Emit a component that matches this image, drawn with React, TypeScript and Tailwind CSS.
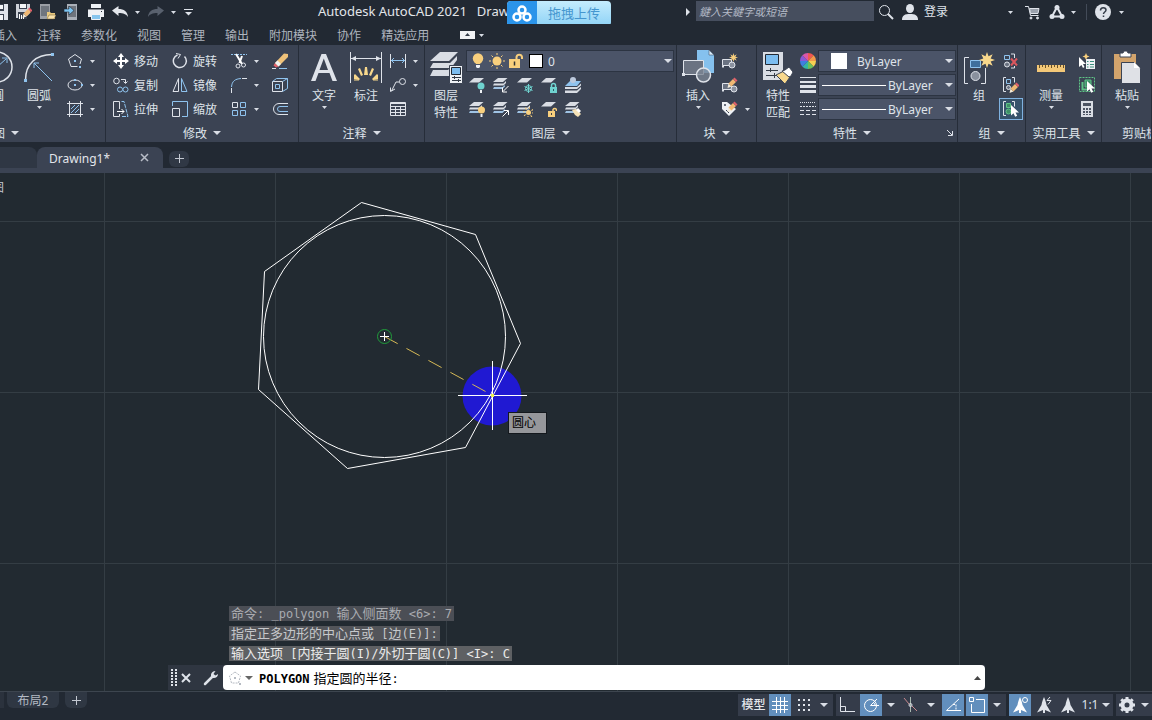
import type { ReactNode } from "react";
import clsx from "clsx";

interface IconProps {
  children: ReactNode;
  size?: number;
}

// stroke based icon, fills are given on the shapes themselves
const Icon = ({ children, size = 16 }: IconProps) => (
  <svg
    width={size}
    height={size}
    viewBox={`0 0 ${size} ${size}`}
    fill="none"
    stroke="#dfe3ea"
    className="shrink-0"
    aria-hidden="true"
  >
    {children}
  </svg>
);

const Caret = ({ big = false }: { big?: boolean }) =>
  big ? (
    <svg width="8" height="4" viewBox="0 0 8 4" className="shrink-0" aria-hidden="true">
      <path d="M0 0h8L4 4z" fill="#d9dde5" />
    </svg>
  ) : (
    <svg width="5" height="3" viewBox="0 0 5 3" className="shrink-0" aria-hidden="true">
      <path d="M0 0h5L2.500 3z" fill="#d9dde5" />
    </svg>
  );

const Pencil = () => (
  <g stroke="none">
    <path d="M6.500 14l1-4.500 3 3z" fill="#f3ead8" />
    <path d="M7.500 9.500L12 5l3 3-4.500 4.500z" fill="#f0b873" />
    <path d="M12 5l1.500-1.500 3 3L15 8z" fill="#e0606a" />
  </g>
);

const Cursor = () => <path d="M8 4v10.500l2.500-2.200 1.700 3.500 2-1-1.700-3.300H16z" fill="#fff" stroke="none" />;

const Sheet = () => <path d="M5 1h10l-5 4.500H0z" fill="#d9dde4" stroke="none" />;

const Stack = () => (
  <g stroke="none">
    <path d="M5 1h9.500L10 5H0z" fill="#d9dde4" />
    <path d="M1 6.500h9.500L13 4v2l-2.500 2.500H0z" fill="#d9dde4" />
    <path d="M1 10h8.500L12 8v1.500L9.500 12H0z" fill="#9fc3e4" />
  </g>
);

const Rays = ({ x, y, r, r2, n = 8, color }: { x: number; y: number; r: number; r2: number; n?: number; color: string }) => {
  const points = Array.from({ length: n * 2 }, (_, i) => {
    const a = (Math.PI * i) / n;
    const d = i % 2 ? r : r2;
    return `${x + d * Math.sin(a)},${y - d * Math.cos(a)}`;
  });
  return <polygon points={points.join(" ")} fill={color} stroke="none" />;
};

const icons = {
  save: (
    <Icon>
      <path d="M0 0h16v16H0z" fill="#dfe3ea" stroke="none" />
      <path d="M3 0h9v7H3zM3 10h9v6H3z" fill="#3a4250" stroke="none" />
      <path d="M4 1h7v4H4zM6 11h5v5H6z" fill="#f4f6f8" stroke="none" />
    </Icon>
  ),
  saveAs: (
    <Icon>
      <path d="M0 0h14v9l-5 5H0z" fill="#cfd3da" stroke="none" />
      <path d="M3 0h8v5H3zM2 8h9v7H2z" fill="#3a4250" stroke="none" />
      <path d="M4 0h6v4H4z" fill="#f4f6f8" stroke="none" />
      <path d="M3.500 15V10M5.500 15v-4M7.500 15v-3" stroke="#fff" />
      <Pencil />
    </Icon>
  ),
  open: (
    <Icon>
      <path d="M0 0h10v15H0z" fill="#9b9fa6" stroke="none" />
      <path d="M1 2h8v10H1z" fill="#6f757e" stroke="none" />
      <path d="M7 8h3l1 1h4v6H7z" fill="#e8c87e" stroke="none" />
      <path d="M7 15l2-4h7l-2 4z" fill="#f9e2ab" stroke="#6c5a35" strokeWidth=".5" />
    </Icon>
  ),
  cloudOpen: (
    <Icon>
      <path d="M3 0h10v16H3z" fill="#aab0b9" stroke="none" />
      <path d="M4 2h8v11H4z" fill="#6f757e" stroke="none" />
      <path d="M0 5h5V2l5 4.500-5 4.500V8H0z" fill="#7cc4f2" stroke="#222933" strokeWidth=".6" />
    </Icon>
  ),
  print: (
    <Icon>
      <path d="M3 0h10v4H3zM0 5h16v8H0z" fill="#eef1f5" stroke="none" />
      <path d="M0 5h16M13 7.500h1" stroke="#222933" />
      <path d="M3.500 10.500h9v5h-9z" fill="#86c5ee" stroke="#eef1f5" />
    </Icon>
  ),
  undo: (
    <Icon>
      <path d="M0 6.500L6.500 2v3c5.500 0 9 2.500 9.500 8-2-3-4.500-4-9.500-4v3z" fill="#e3e6eb" stroke="none" />
    </Icon>
  ),
  redo: (
    <Icon>
      <path d="M16 6.500L9.500 2v3C4 5 .5 7.500 0 13c2-3 4.500-4 9.500-4v3z" fill="#59616e" stroke="none" />
    </Icon>
  ),
  more: (
    <Icon size={9}>
      <path d="M0 1.500h9" />
      <path d="M1 4h7L4.500 7.500z" fill="#dfe3ea" stroke="none" />
    </Icon>
  ),
  polygon: (
    <Icon>
      <path d="M10.500 13.500H4L1.500 6 8 1.500 14.500 6l-1.500 5" />
      <path d="M7 8h2M12 14h2" stroke="#8fc3ee" strokeWidth="2" />
    </Icon>
  ),
  ellipse: (
    <Icon>
      <ellipse cx="8" cy="8" rx="7" ry="5" />
      <path d="M7 8h2M7 3h2M14 8h2" stroke="#8fc3ee" strokeWidth="2" />
    </Icon>
  ),
  hatch: (
    <Icon>
      <path d="M2.500 0v16M13.500 0v16M0 2.500h16M0 13.500h16" />
      <path d="M4 8l4-4M4 12l8-8M8 12l4-4" stroke="#8fc3ee" />
    </Icon>
  ),
  move: (
    <Icon>
      <path d="M8 2v12M2 8h12" strokeWidth="2" stroke="#fff" />
      <path d="M8 0l3 4H5zM8 16l3-4H5zM0 8l4-3v6zM16 8l-4-3v6z" fill="#fff" stroke="none" />
    </Icon>
  ),
  copy: (
    <Icon>
      <circle cx="3.500" cy="4" r="2.800" />
      <path d="M8 2.500h4.500V6M10.500 4.500l2 2 2-2" />
      <circle cx="7" cy="12.500" r="2.500" stroke="#8fc3ee" />
      <circle cx="12.500" cy="12.500" r="2.500" stroke="#8fc3ee" />
    </Icon>
  ),
  stretch: (
    <Icon>
      <path d="M6.500 8V.5h-6v15h6V13" />
      <path d="M8.500.5H11l4 15H8" stroke="#8fc3ee" strokeDasharray="4 1" />
      <path d="M4 10.500h7M8.500 8l2.500 2.500L8.500 13" stroke="#fff" />
    </Icon>
  ),
  rotate: (
    <Icon>
      <path d="M12.500 3.500A6.500 6.500 0 1 1 5.500 2" strokeWidth="1.500" />
      <path d="M4 .5L8.500 1.500 6 5.500" />
    </Icon>
  ),
  mirror: (
    <Icon>
      <path d="M6.500 1.500v13H1z" />
      <path d="M9.500 1.500v13H15z" stroke="#8fc3ee" />
    </Icon>
  ),
  scale: (
    <Icon>
      <path d="M.5 7.500h7v8h-7z" />
      <path d="M.5 5V.5h15v15H10" stroke="#8fc3ee" />
    </Icon>
  ),
  trim: (
    <Icon>
      <path d="M0 1.500h16" strokeDasharray="2 1" stroke="#8fc3ee" />
      <path d="M5 1l6 10M11 3L8.500 10" strokeWidth="2" stroke="#fff" />
      <circle cx="7" cy="13" r="2" />
      <circle cx="12.500" cy="12" r="2" />
    </Icon>
  ),
  fillet: (
    <Icon>
      <path d="M.5 16v-5M11 1.500h5" />
      <path d="M.5 10C1 4 4 2 10 1.500" stroke="#8fc3ee" />
    </Icon>
  ),
  array: (
    <Icon>
      <path d="M1.500 1.500h5v5h-5z" />
      <path d="M9.500 1.500h5v5h-5zM1.500 9.500h5v5h-5zM9.500 9.500h5v5h-5z" stroke="#8fc3ee" />
    </Icon>
  ),
  erase: (
    <Icon>
      <path d="M0 15.500h4" />
      <path d="M7 15.500h8" stroke="#8fc3ee" />
      <path d="M3 10l3.500 3.500-2.500 1-2.500-2z" fill="#e0606a" stroke="none" />
      <path d="M3 10l9-9.500L16 1v3l-9.500 9.500z" fill="#efc27a" stroke="none" />
      <path d="M3 10l2.500-2.500L9 11l-2.500 2.500z" fill="#f2f2f2" stroke="none" />
    </Icon>
  ),
  explode: (
    <Icon>
      <path d="M.5 4.500h10v10H.5z" />
      <path d="M.5 4.500l4-3h11l-5 3M15.500 1.500v10l-5 3M3.500 7.500h4v4h-4z" stroke="#8fc3ee" />
    </Icon>
  ),
  offset: (
    <Icon>
      <path d="M16 2.500H7a5.500 5.500 0 0 0 0 11h9" />
      <path d="M16 5.500H8a2.500 2.500 0 0 0 0 5h8" stroke="#8fc3ee" />
    </Icon>
  ),
  linear: (
    <Icon>
      <path d="M.5 1v14M15.500 1v14" />
      <path d="M1 7.500h14M4 5L1.500 7.500 4 10M12 5l2.500 2.500L12 10" stroke="#8fc3ee" />
    </Icon>
  ),
  leader: (
    <Icon>
      <circle cx="12.500" cy="4.500" r="3" />
      <path d="M9.500 5H6L1.500 14M.5 10.500v4L5 12" />
    </Icon>
  ),
  table: (
    <Icon>
      <path d="M.5 1.500h15v13H.5zM.5 2.500h15M.5 5.500h15M.5 8.500h15M.5 11.500h15M5.500 5v9M10.500 5v9" />
    </Icon>
  ),
  bulb: (
    <Icon>
      <circle cx="8" cy="5.500" r="5.200" fill="#f8cf7d" stroke="none" />
      <path d="M5 9h6l-1 2H6z" fill="#f8cf7d" stroke="none" />
      <path d="M6 12h4v2l-1 1H7l-1-1z" fill="#eef1f5" stroke="none" />
    </Icon>
  ),
  sun: (
    <Icon>
      <circle cx="8" cy="8" r="4.500" fill="#f8cf7d" stroke="none" />
      <path d="M8 0v2M8 14v2M0 8h2M14 8h2M2.500 2.500l1.500 1.500M12 12l1.500 1.500M2.500 13.500L4 12M12 4l1.500-1.500" stroke="#f8cf7d" />
    </Icon>
  ),
  unlock: (
    <Icon>
      <path d="M8.500 7V4a2.800 2.800 0 0 1 5.500 0v2" stroke="#f8cf7d" strokeWidth="2" />
      <path d="M1 6h11v9H1z" fill="#f8cf7d" stroke="none" />
      <path d="M6.500 8.500v4" stroke="#333" strokeWidth="1.500" />
    </Icon>
  ),
  search: (
    <Icon>
      <circle cx="6.500" cy="6.500" r="5" />
      <path d="M10 10l5 5" strokeWidth="2" />
    </Icon>
  ),
  user: (
    <Icon>
      <ellipse cx="8" cy="4.500" rx="4" ry="4.500" fill="#dfe3ea" stroke="none" />
      <path d="M0 16c0-5 3-6 8-6s8 1 8 6z" fill="#dfe3ea" stroke="none" />
    </Icon>
  ),
  cart: (
    <Icon>
      <path d="M0 2.500h3.500l2 9h8" />
      <path d="M4.500 4.500H14l-1 5H5.500z" fill="#9aa1ac" />
      <circle cx="6" cy="14" r="1" fill="#dfe3ea" />
      <circle cx="12.500" cy="14" r="1" fill="#dfe3ea" />
    </Icon>
  ),
  appStore: (
    <Icon>
      <path d="M8 3L3 12.500h10z" strokeWidth="2" />
      <circle cx="8" cy="3.500" r="2.500" fill="#dfe3ea" stroke="none" />
      <circle cx="3" cy="12.500" r="2.500" fill="#dfe3ea" stroke="none" />
      <circle cx="13" cy="12.500" r="2.500" fill="#dfe3ea" stroke="none" />
    </Icon>
  ),
  help: (
    <Icon>
      <circle cx="8" cy="8" r="8" fill="#dfe3ea" stroke="none" />
      <path d="M5.500 6.500c0-4 5.500-3.500 5.500-.5 0 2-2.500 2-2.500 4M8.500 11.500v1.500" stroke="#333b47" strokeWidth="1.500" />
    </Icon>
  ),
  insertNew: (
    <Icon>
      <path d="M.5 6.500h9v6h-9z" fill="#6b7382" />
      <circle cx="10" cy="12" r="3" fill="#8a919e" />
      <path d="M0 13.500h2" strokeWidth="2" />
      <Rays x={11.500} y={4.500} r={2} r2={4.500} color="#f8cf7d" />
    </Icon>
  ),
  insertEdit: (
    <Icon>
      <path d="M.5 6.500h9v6h-9z" fill="#6b7382" />
      <circle cx="12" cy="12" r="3" fill="#8a919e" />
      <path d="M0 13.500h2" strokeWidth="2" />
      <g transform="translate(-1 -3)"><Pencil /></g>
    </Icon>
  ),
  attribute: (
    <Icon>
      <path d="M0 1h5l9 7-7 7-7-7z" fill="#eef1f5" stroke="none" />
      <circle cx="3" cy="4" r="1" fill="#3b4353" stroke="none" />
      <path d="M4 9l3 3" stroke="#3b4353" />
      <g transform="translate(-1 -3)"><Pencil /></g>
    </Icon>
  ),
  lineweight: (
    <Icon>
      <path d="M0 0h16v1H0zM0 4h16v2H0zM0 8h16v3H0zM0 13h16v3H0z" fill="#dfe3ea" stroke="none" />
    </Icon>
  ),
  linetype: (
    <Icon>
      <path d="M0 1.500h16" strokeDasharray="1 1" />
      <path d="M0 5.500h16" strokeDasharray="2 1" />
      <path d="M0 9.500h16M0 13.500h16" strokeDasharray="4 2" />
    </Icon>
  ),
  colorWheel: (
    <Icon>
      {["#f0574f", "#f2994a", "#f5cf52", "#6cc05a", "#35b5a5", "#3f7ee0", "#8a58d6", "#d957a8"].map((c, i) => {
        const a = (i * Math.PI) / 4;
        const b = a + Math.PI / 4;
        return (
          <path
            key={c}
            d={`M8 8L${8 + 8 * Math.sin(a)} ${8 - 8 * Math.cos(a)}A8 8 0 0 1 ${8 + 8 * Math.sin(b)} ${8 - 8 * Math.cos(b)}z`}
            fill={c}
            stroke="none"
          />
        );
      })}
    </Icon>
  ),
  ungroup: (
    <Icon>
      <path d="M1.500 2.500h5v4h-5z" stroke="#8fc3ee" />
      <circle cx="4" cy="11.500" r="2.500" fill="#6b7382" />
      <path d="M8 1h3.500v4M11.500 13v2H8" />
      <path d="M8 5.500l6 7M14 5.500l-6 7" stroke="#d9575e" strokeWidth="2" />
    </Icon>
  ),
  groupEdit: (
    <Icon>
      <path d="M3 .5H.5v14H3M9 .5h2.500v5" />
      <path d="M3.500 2.500h4v4h-4z" stroke="#8fc3ee" />
      <circle cx="5.500" cy="10.500" r="2" fill="#6b7382" />
      <g transform="translate(0 2)"><Pencil /></g>
    </Icon>
  ),
  groupSelect: (
    <Icon>
      <path d="M3 .5H.5v14H3M9 .5h2.500v5" />
      <path d="M3.500 2.500h4v4h-4z" stroke="#5fc487" fill="#3f8f68" />
      <circle cx="5.500" cy="10.500" r="2.500" stroke="#5fc487" fill="#3f8f68" />
      <Cursor />
    </Icon>
  ),
  quickSelect: (
    <Icon>
      <path d="M7 6h9v10H7z" fill="#eef1f5" stroke="none" />
      <path d="M8 8.500h1.500M11 8.500h4M8 11.500h1.500M11 11.500h4M8 14h1.500M11 14h4" stroke="#3a8f7d" />
      <path d="M0 4v10l2.500-2 1.500 3 1.500-1-1.500-3h3z" fill="#fff" stroke="none" />
      <Rays x={7} y={3.500} r={1.500} r2={3.500} n={4} color="#f8cf7d" />
    </Icon>
  ),
  selectAll: (
    <Icon>
      <path d="M.5.5h15v14H.5z" stroke="#5fc487" strokeDasharray="2 1" />
      <path d="M6 3h6v7H6z" fill="#3f8f68" stroke="#5fc487" />
      <path d="M3.500 5v7.500H9" stroke="#5fc487" strokeWidth="2" />
      <Cursor />
    </Icon>
  ),
  calculator: (
    <Icon>
      <path d="M2 0h12v16H2z" fill="#d9dde4" stroke="none" />
      <path d="M4 2h8v3H4zM4 7h2v2H4zM7 7h2v2H7zM10 7h2v2h-2zM4 10h2v2H4zM7 10h2v2H7zM10 10h2v2h-2zM4 13h2v1H4zM7 13h2v1H7zM10 13h2v1h-2z" fill="#4b5362" stroke="none" />
    </Icon>
  ),
};

const layerTools = [
  {
    name: "关闭",
    icon: (
      <Icon>
        <Sheet />
        <circle cx="12" cy="9" r="3.500" fill="#6fd3d0" stroke="none" />
        <path d="M11 13h2v3h-2z" fill="#eef1f5" stroke="none" />
      </Icon>
    ),
  },
  {
    name: "置为当前",
    icon: (
      <Icon>
        <Stack />
        <path d="M15.500 9L10 14.500M9.500 10.500v4.500H14" stroke="#fff" />
      </Icon>
    ),
  },
  {
    name: "冻结",
    icon: (
      <Icon>
        <Sheet />
        <path d="M11.500 7v9M7.500 9.500l8 4M7.500 13.500l8-4" stroke="#6fd3d0" />
        <circle cx="11.500" cy="11.500" r="3" stroke="#6fd3d0" />
      </Icon>
    ),
  },
  {
    name: "锁定",
    icon: (
      <Icon>
        <Sheet />
        <path d="M10.500 10V8.500a2 2 0 0 1 4 0V10" stroke="#6fd3d0" strokeWidth="1.500" />
        <path d="M9 10h7v6H9z" fill="#6fd3d0" stroke="none" />
        <path d="M12.500 12v2" stroke="#2b5a60" />
      </Icon>
    ),
  },
  {
    name: "匹配图层",
    icon: (
      <Icon>
        <path d="M5 4h11l-4 5H0z" fill="#8fc3ee" stroke="none" />
        <path d="M0 10h12l4-3.500v2L12 12H0zM0 13.500h12l4-3.500v2l-4 4H0z" fill="#d9dde4" stroke="none" />
        <circle cx="8" cy="3" r="3" fill="#bcc9dc" stroke="none" />
      </Icon>
    ),
  },
  {
    name: "打开所有图层",
    icon: (
      <Icon>
        <Stack />
        <circle cx="12.500" cy="9" r="3.500" fill="#f8cf7d" stroke="none" />
        <path d="M11.500 13h2v3h-2z" fill="#eef1f5" stroke="none" />
      </Icon>
    ),
  },
  {
    name: "上一个",
    icon: (
      <Icon>
        <Stack />
        <path d="M9.500 15.500L15 10M11 9.500h4.500V14" stroke="#fff" />
      </Icon>
    ),
  },
  {
    name: "解冻",
    icon: (
      <Icon>
        <Stack />
        <circle cx="11.500" cy="11.500" r="4.500" stroke="#f8cf7d" strokeDasharray="1 2.500" strokeWidth="2" />
        <circle cx="11.500" cy="11.500" r="2.500" fill="#f8cf7d" stroke="none" />
      </Icon>
    ),
  },
  {
    name: "解锁",
    icon: (
      <Icon>
        <Sheet />
        <path d="M12 10V8.500a2 2 0 0 1 3.500 0V10" stroke="#f8cf7d" strokeWidth="1.500" />
        <path d="M7 10h7v6H7z" fill="#f8cf7d" stroke="none" />
        <path d="M10.500 12v2" stroke="#444" />
      </Icon>
    ),
  },
  {
    name: "更改为当前图层",
    icon: (
      <Icon>
        <Stack />
        <path d="M7 9l4-1 5 5-3 3-3-2z" fill="#f6e3b8" stroke="none" />
        <path d="M11 9l2-2 3 3-2 2z" fill="#fff" stroke="none" />
      </Icon>
    ),
  },
];

const bigIcons = {
  circle: (
    <Icon size={32}>
      <circle cx="15" cy="18" r="15" strokeWidth="1.500" />
      <path d="M15 18l9-8M20 9h5v5" stroke="#8fc3ee" />
    </Icon>
  ),
  arc: (
    <Icon size={32}>
      <path d="M2.500 31C2.500 15 13 5.500 29 5.500" strokeWidth="1.500" />
      <path d="M29 32L11 14M11 19v-5h5" stroke="#8fc3ee" />
      <path d="M1 30h3v3H1zM28 4h3v3h-3z" fill="#8fc3ee" stroke="none" />
    </Icon>
  ),
  text: (
    <Icon size={32}>
      <path d="M3 32L13.500 5h4.500L29 32h-4.500l-3-8h-11l-3 8zM11.500 21h8.500L15.800 9.500z" fill="#dfe3ea" fillRule="evenodd" stroke="none" />
    </Icon>
  ),
  dimension: (
    <Icon size={32}>
      <path d="M.5 3v31M31.500 3v31M1 9.500h30" />
      <path d="M1 9.500l5-2.500v5zM31 9.500L26 7v5z" fill="#dfe3ea" stroke="none" />
      <path d="M15 18h2l1 8h-4zM8 20l2-1 3 7-2 1zM24 20l-2-1-3 7 2 1zM4 26l1-1 5 5-1 1-5-1zM28 26l-1-1-5 5 1 1 5-1z" fill="#f8d88c" stroke="none" />
      <path d="M4 31h5M23 31h5" stroke="#f8d88c" />
    </Icon>
  ),
  layers: (
    <Icon size={32}>
      <path d="M10 3h18l-9 9H0z" fill="#d9dde4" stroke="none" />
      <path d="M3 14h17l7-7v4l-6 8H0zM3 21h15l3-3v4l-2 5H0z" fill="#d9dde4" stroke="none" />
      <path d="M19.500 16.500h13v18h-13z" fill="#eef1f5" stroke="#3b4353" />
      <path d="M21.500 18.500h9v7h-9z" fill="#7cbdf0" stroke="#222933" />
      <path d="M22 28.500h9M22 31.500h9M24.500 27v3M28.500 30v3" stroke="#333b47" />
    </Icon>
  ),
  insert: (
    <Icon size={32}>
      <path d="M15 1h12l5 5v18H15z" fill="#85c1ee" stroke="none" />
      <path d="M27 1v5h5z" fill="#d5e9f8" stroke="#3b4353" strokeWidth=".5" />
      <path d="M1.500 11.500h20v14h-20z" fill="#6b7382" />
      <circle cx="21.500" cy="26" r="7" fill="#7b8493" fillOpacity=".8" strokeWidth="1.500" />
      <path d="M0 24h3v3H0z" fill="#dfe3ea" stroke="none" />
    </Icon>
  ),
  match: (
    <Icon size={32}>
      <path d="M1 3h20v28H1z" fill="#d9dde4" stroke="none" />
      <path d="M3.500 5.500h13v10h-13z" fill="#7cbdf0" stroke="#222933" />
      <path d="M4 21.500h12M4 26.500h10M8.500 19v4M12.500 24v5" stroke="#333b47" />
      <path d="M14 26l8-4 6 6-5 7z" fill="#f8d88c" stroke="#3b4353" />
      <path d="M20 22l3-1 4-3 4 5-2 4-2 1z" fill="#fff" stroke="#3b4353" />
    </Icon>
  ),
  group: (
    <Icon size={32}>
      <path d="M6 8.500H1.500v26H5M18 34.500h4.500V19" />
      <path d="M7.500 11.500h10v7h-10z" fill="#3f6f9c" stroke="#8fc3ee" />
      <circle cx="12.500" cy="27" r="4.500" fill="#8a919e" />
      <Rays x={24} y={11} r={4} r2={8} color="#f8d88c" />
    </Icon>
  ),
  ruler: (
    <Icon size={32}>
      <path d="M2 16h28v7H2z" fill="#f3c878" stroke="none" />
      <path d="M4.500 16v3M7.500 16v2M10.500 16v3M13.500 16v2M16.500 16v3M19.500 16v2M22.500 16v3M25.500 16v2M28.500 16v3" stroke="#6a5228" />
    </Icon>
  ),
  paste: (
    <Icon size={32}>
      <path d="M3 5h22v25H3z" fill="#d3a46c" stroke="none" />
      <path d="M9 4h3l1-2h3l1 2h3v4H9z" fill="#fff" stroke="#3b4353" />
      <path d="M10.500 13.500H23l6.500 6v15h-19z" fill="#dfe1e6" stroke="#3b4353" />
      <path d="M23 13v6h6z" fill="#fff" stroke="none" />
    </Icon>
  ),
};

interface PanelProps {
  title: string;
  children: ReactNode;
  className?: string;
  titleClass?: string;
  caret?: boolean;
  launcher?: boolean;
}

const Panel = ({ title, children, className, titleClass, caret = true, launcher = false }: PanelProps) => (
  <section className={clsx("flex flex-col shrink-0 overflow-hidden border-r border-[#262d39] pt-1", className)}>
    <div className="flex h-[75px]">{children}</div>
    <div className="flex h-[18px] items-center">
      <button className={clsx("flex flex-1 items-center justify-center gap-1.5 whitespace-nowrap", titleClass)}>
        <span className="pt-0.5">{title}</span>
        {caret && <Caret big />}
      </button>
      {launcher && (
        <button aria-label="特性面板" className="mr-1">
          <Icon size={6}>
            <path d="M0 0l5 5M5.500 1v4.500H1" />
          </Icon>
        </button>
      )}
    </div>
  </section>
);

interface BigButtonProps {
  icon: ReactNode;
  lines: string[];
  caret?: boolean;
  className?: string;
}

const BigButton = ({ icon, lines, caret = false, className }: BigButtonProps) => (
  <button className={clsx("flex w-8 shrink-0 flex-col items-center", className)}>
    <span className="h-[39px] [&>svg]:overflow-visible">{icon}</span>
    {lines.map((line) => (
      <span key={line} className="h-[17px] whitespace-nowrap leading-4">
        {line}
      </span>
    ))}
    {caret && (
      <span className="pt-px">
        <Caret />
      </span>
    )}
  </button>
);

interface Tool {
  name: string;
  icon: ReactNode;
  text?: boolean;
  caret?: boolean;
  active?: boolean;
}

const ToolColumn = ({ tools, className }: { tools: Tool[]; className?: string }) => (
  <div className={clsx("flex shrink-0 flex-col", className)}>
    {tools.map((t) => (
      <div key={t.name} className="flex h-6 items-center">
        <button
          aria-label={t.name}
          className={clsx(
            "flex items-center gap-[5px] whitespace-nowrap",
            t.active && "-mx-1 h-[22px] border border-[#7fb2e0] bg-[#36536b] px-[3px]"
          )}
        >
          {t.icon}
          {t.text && <span className="pt-0.5">{t.name}</span>}
        </button>
        {t.caret && (
          <button aria-label={`${t.name}选项`} className="ml-[7px]">
            <Caret />
          </button>
        )}
      </div>
    ))}
  </div>
);

const PropertySelect = ({ label, children }: { label: string; children: ReactNode }) => (
  <div className="flex h-[22px] items-center border border-[#2c3442] bg-[#4b5468] pr-0.5">
    {children}
    <select aria-label={label} className="h-5 min-w-0 flex-1 appearance-none pt-0.5 outline-none">
      <option>ByLayer</option>
    </select>
    <Caret big />
  </div>
);

const TitleBar = () => (
  <header className="relative flex h-6 items-center overflow-hidden">
    <div className="-ml-2 flex w-[326px] shrink-0 items-center">
      <button aria-label="保存">{icons.save}</button>
      <button aria-label="另存为" className="ml-2">{icons.saveAs}</button>
      <button aria-label="打开" className="ml-2">{icons.open}</button>
      <button aria-label="从 Web 打开" className="ml-2">{icons.cloudOpen}</button>
      <button aria-label="打印" className="ml-2">{icons.print}</button>
      <button aria-label="放弃" className="ml-2">{icons.undo}</button>
      <button aria-label="放弃选项" className="ml-[7px]"><Caret /></button>
      <button aria-label="重做" className="ml-2">{icons.redo}</button>
      <button aria-label="重做选项" className="ml-[7px]"><Caret /></button>
      <button aria-label="自定义快速访问" className="ml-2">{icons.more}</button>
    </div>
    <h1 className="flex flex-1 gap-2.5 whitespace-nowrap text-[13px] text-[#e2e5ea]">
      <span>Autodesk AutoCAD 2021</span>
      <span>Draw</span>
    </h1>
    <button className="absolute left-[507px] top-px flex h-[25px] w-[104px] overflow-hidden rounded-sm bg-linear-to-b from-[#c4ecfd] to-[#8fd3f6] text-[13px] text-[#4596cf]">
      <span className="flex w-[30px] items-center justify-center self-stretch bg-[#2b94ea]">
        <svg width="20" height="18" viewBox="0 0 20 18" fill="none" stroke="#fff" strokeWidth="2.500" aria-hidden="true">
          <circle cx="10" cy="5" r="3.500" />
          <circle cx="5" cy="12" r="3.500" />
          <circle cx="15" cy="12" r="3.500" />
        </svg>
      </span>
      <span className="flex-1 self-center">拖拽上传</span>
    </button>
    <div className="flex shrink-0 items-center">
      <svg width="4" height="8" viewBox="0 0 4 8" className="mr-1.5" aria-hidden="true">
        <path d="M0 0l4 4-4 4z" fill="#dfe3ea" />
      </svg>
      <input
        type="search"
        aria-label="搜索"
        placeholder="鍵入关鍵字或短语"
        className="mb-0.5 h-5 w-[178px] bg-[#464e5e] px-[3px] text-[11px] italic outline-none placeholder:text-[#b4bac6]"
      />
      <button aria-label="查找" className="ml-1">{icons.search}</button>
      <button className="ml-2 flex items-center gap-1.5">
        {icons.user}
        登录
      </button>
      <button aria-label="登录选项" className="ml-[60px]"><Caret /></button>
      <button aria-label="购物车" className="ml-3">{icons.cart}</button>
      <button aria-label="应用商店" className="ml-2">{icons.appStore}</button>
      <button aria-label="应用商店选项" className="ml-1.5"><Caret /></button>
      <span className="ml-2.5 h-4 w-px bg-[#434b58]" />
      <button aria-label="帮助" className="ml-2">{icons.help}</button>
      <button aria-label="帮助选项" className="ml-2 mr-7"><Caret /></button>
    </div>
  </header>
);

const menuTabs = ["插入", "注释", "参数化", "视图", "管理", "输出", "附加模块", "协作", "精选应用"];

const MenuTabs = () => (
  <nav className="flex h-[21px] items-center gap-5 overflow-hidden pt-px text-[#aeb4be]">
    {menuTabs.map((tab, i) => (
      <a key={tab} href="#" className={clsx("shrink-0 pt-px", i === 0 && "-ml-[7px]")}>
        {tab}
      </a>
    ))}
    <button aria-label="最小化功能区" className="ml-[11px] flex items-center gap-1">
      <svg width="15" height="8" viewBox="0 0 15 8" aria-hidden="true">
        <path d="M0 0h15v8H0z" fill="#f1f3f5" />
        <path d="M7.500 2l2.500 3H5z" fill="#333b47" />
      </svg>
      <Caret />
    </button>
  </nav>
);

const Ribbon = () => (
  <div className="flex h-[97px] overflow-hidden bg-[#3b4353]">
    <Panel title="绘图" className="w-[106px]" titleClass="-ml-[105px]">
      <BigButton icon={bigIcons.circle} lines={["圆"]} className="-ml-[18px]" />
      <BigButton icon={bigIcons.arc} lines={["圆弧"]} caret className="ml-[9px]" />
      <ToolColumn
        className="ml-3"
        tools={[
          { name: "多边形", icon: icons.polygon, caret: true },
          { name: "椭圆", icon: icons.ellipse, caret: true },
          { name: "图案填充", icon: icons.hatch, caret: true },
        ]}
      />
    </Panel>
    <Panel title="修改" className="w-[193px]">
      <ToolColumn
        className="ml-[7px] w-[59px]"
        tools={[
          { name: "移动", icon: icons.move, text: true },
          { name: "复制", icon: icons.copy, text: true },
          { name: "拉伸", icon: icons.stretch, text: true },
        ]}
      />
      <ToolColumn
        className="w-[59px]"
        tools={[
          { name: "旋转", icon: icons.rotate, text: true },
          { name: "镜像", icon: icons.mirror, text: true },
          { name: "缩放", icon: icons.scale, text: true },
        ]}
      />
      <ToolColumn
        className="w-[41px]"
        tools={[
          { name: "修剪", icon: icons.trim, caret: true },
          { name: "圆角", icon: icons.fillet, caret: true },
          { name: "阵列", icon: icons.array, caret: true },
        ]}
      />
      <ToolColumn
        tools={[
          { name: "删除", icon: icons.erase },
          { name: "分解", icon: icons.explode },
          { name: "偏移", icon: icons.offset },
        ]}
      />
    </Panel>
    <Panel title="注释" className="w-[126px]">
      <BigButton icon={bigIcons.text} lines={["文字"]} caret className="ml-[9px]" />
      <BigButton icon={bigIcons.dimension} lines={["标注"]} className="ml-[10px]" />
      <ToolColumn
        className="ml-2"
        tools={[
          { name: "线性", icon: icons.linear, caret: true },
          { name: "引线", icon: icons.leader, caret: true },
          { name: "表格", icon: icons.table },
        ]}
      />
    </Panel>
    <Panel title="图层" className="w-[252px]">
      <BigButton icon={bigIcons.layers} lines={["图层", "特性"]} className="ml-[5px]" />
      <div className="ml-1 mr-0.5 flex flex-1 flex-col">
        <div className="flex h-6 items-center">
          <div className="flex h-[22px] flex-1 items-center gap-[3px] border border-[#2c3442] bg-[#4b5468] pl-[3px] pr-px">
            {icons.bulb}
            {icons.sun}
            {icons.unlock}
            <span className="ml-0.5 h-3.5 w-3.5 border border-black bg-white" />
            <select aria-label="图层" className="ml-0.5 h-5 min-w-0 flex-1 appearance-none pt-0.5 outline-none">
              <option>0</option>
            </select>
            <Caret big />
          </div>
        </div>
        <div className="grid w-[122px] grid-cols-5 pl-0.5">
          {layerTools.map((t) => (
            <button key={t.name} aria-label={t.name} className="flex h-6 items-center pl-px">
              {t.icon}
            </button>
          ))}
        </div>
      </div>
    </Panel>
    <Panel title="块" className="w-20">
      <BigButton icon={bigIcons.insert} lines={["插入"]} caret className="ml-[5px]" />
      <ToolColumn
        className="ml-2"
        tools={[
          { name: "创建", icon: icons.insertNew },
          { name: "编辑", icon: icons.insertEdit },
          { name: "编辑属性", icon: icons.attribute, caret: true },
        ]}
      />
    </Panel>
    <Panel title="特性" className="w-[201px]" launcher>
      <BigButton icon={bigIcons.match} lines={["特性", "匹配"]} className="ml-[5px]" />
      <ToolColumn
        className="ml-1.5"
        tools={[
          { name: "对象颜色", icon: icons.colorWheel },
          { name: "线宽", icon: icons.lineweight },
          { name: "线型", icon: icons.linetype },
        ]}
      />
      <div className="ml-0.5 mr-px flex flex-1 flex-col gap-0.5 pt-px">
        <PropertySelect label="对象颜色">
          <span className="ml-3 mr-2.5 h-4 w-4 bg-white" />
        </PropertySelect>
        <PropertySelect label="线宽">
          <span className="ml-[3px] mr-0.5 h-px w-16 bg-white" />
        </PropertySelect>
        <PropertySelect label="线型">
          <span className="ml-[3px] mr-0.5 h-px w-16 bg-white" />
        </PropertySelect>
      </div>
    </Panel>
    <Panel title="组" className="w-[68px]">
      <BigButton icon={bigIcons.group} lines={["组"]} className="ml-[5px]" />
      <ToolColumn
        className="ml-2"
        tools={[
          { name: "解除编组", icon: icons.ungroup },
          { name: "组编辑", icon: icons.groupEdit },
          { name: "启用组选择", icon: icons.groupSelect, active: true },
        ]}
      />
    </Panel>
    <Panel title="实用工具" className="w-[76px]">
      <BigButton icon={bigIcons.ruler} lines={["测量"]} caret className="ml-[9px]" />
      <ToolColumn
        className="ml-3"
        tools={[
          { name: "快速选择", icon: icons.quickSelect },
          { name: "全部选择", icon: icons.selectAll },
          { name: "快速计算器", icon: icons.calculator },
        ]}
      />
    </Panel>
    <Panel title="剪贴板" className="min-w-[50px] flex-1" titleClass="ml-5 !justify-start" caret={false}>
      <BigButton icon={bigIcons.paste} lines={["粘贴"]} caret className="ml-[9px]" />
    </Panel>
  </div>
);

const FileTabs = () => (
  <div className="border-b-[5px] border-[#3b4353] pt-[5px]">
    <div className="flex h-[21px] items-stretch">
      <div className="w-[37px] rounded-tr-lg bg-[#2f3744]" />
      <div className="flex w-[126px] items-center justify-between rounded-t-lg bg-[#3b4353] pl-3 pr-3.5 text-[#e2e5ea]">
        <a href="#" className="pt-0.5">Drawing1*</a>
        <button aria-label="关闭 Drawing1">
          <Icon size={9}>
            <path d="M1 1l7 7M8 1L1 8" strokeWidth="1.500" stroke="#b9bec8" />
          </Icon>
        </button>
      </div>
      <button aria-label="新图形" className="ml-1.5 mt-0.5 flex h-4 w-5 items-center justify-center self-center rounded-md bg-[#303845]">
        <Icon size={9}>
          <path d="M4.500 0v9M0 4.500h9" stroke="#c3c8d1" />
        </Icon>
      </button>
    </div>
  </div>
);

const history = [
  { text: "命令: _polygon 输入侧面数 <6>: 7", style: "bg-[#4b4e55] text-[#a9abb0]" },
  { text: "指定正多边形的中心点或 [边(E)]:", style: "bg-[#53555a] text-[#c6c8cb]" },
  { text: "输入选项 [内接于圆(I)/外切于圆(C)] <I>: C", style: "bg-[#5e6063] text-[#ececec]" },
];

// latin runs are set one step smaller than the chinese ones
const MixedText = ({ text }: { text: string }) => (
  <>
    {text.split(/([\x20-\x7e]+)/).map((part, i) => (
      <span key={i} className={clsx("whitespace-pre", i % 2 === 1 && "text-xs")}>
        {part}
      </span>
    ))}
  </>
);

const CommandLine = () => (
  <div className="absolute bottom-px left-[168px] right-[167px] font-['DejaVu_Sans_Mono','Noto_Sans_CJK_SC',monospace] text-[13px]">
    <div className="ml-[61px] flex flex-col items-start gap-[5px] pb-1">
      {history.map((h) => (
        <p key={h.text} className={clsx("h-[15px] px-0.5 leading-[15px]", h.style)}>
          <MixedText text={h.text} />
        </p>
      ))}
    </div>
    <div className="flex h-[25px] bg-[#2f3641]">
      <div className="flex w-[55px] items-center gap-1 pl-[3px]">
        <svg width="6" height="17" viewBox="0 0 6 17" aria-hidden="true">
          <path d="M1 0v17M5 0v17" stroke="#dfe3ea" strokeWidth="2" strokeDasharray="2 1" />
        </svg>
        <button aria-label="关闭命令行">
          <Icon size={10}>
            <path d="M1 1l8 8M9 1L1 9" strokeWidth="2" />
          </Icon>
        </button>
        <button aria-label="自定义" className="ml-2">
          <Icon>
            <path d="M2 14l7-7" strokeWidth="2.500" strokeLinecap="round" />
            <path d="M12.500 1C9 1 7 4 8.500 7.500c3 1.500 6.500 0 6.500-3.500l-2.500 1.500-2-1.500z" fill="#dfe3ea" stroke="none" />
          </Icon>
        </button>
      </div>
      <div className="flex flex-1 items-center rounded-sm bg-white pl-1 pr-1 text-black">
        <button aria-label="最近使用的命令" className="flex items-center gap-0.5">
          <Icon>
            <path d="M8 2l5.500 4-2 7h-7l-2-7z" stroke="#b5bac2" strokeDasharray="2 1" />
            <path d="M7 8h2M12 14h2" stroke="#b5bac2" strokeWidth="2" />
          </Icon>
          <svg width="8" height="4" viewBox="0 0 8 4" aria-hidden="true">
            <path d="M0 0h8L4 4z" fill="#666" />
          </svg>
        </button>
        <label htmlFor="command" className="ml-1.5 whitespace-nowrap pt-0.5">
          <b className="text-xs">POLYGON</b>
          <span className="ml-1">
            <MixedText text="指定圆的半径:" />
          </span>
        </label>
        <input id="command" type="text" className="min-w-0 flex-1 outline-none" />
        <svg width="7" height="4" viewBox="0 0 7 4" aria-hidden="true">
          <path d="M0 4h7L3.500 0z" fill="#444" />
        </svg>
      </div>
    </div>
  </div>
);

const Canvas = () => (
  <main className="relative min-h-[400px] flex-1 overflow-hidden border-b border-[#3d454f] bg-[#222a31]">
    <svg className="absolute inset-0 h-full w-full" fill="none" stroke="#fff" role="img" aria-label="正七边形">
      <defs>
        <pattern id="grid" x="104" y="48" width="171" height="171" patternUnits="userSpaceOnUse">
          <path d="M.5 0v171M0 .5h171" stroke="#343d44" />
        </pattern>
      </defs>
      <rect width="100%" height="100%" fill="url(#grid)" stroke="none" />
      <circle cx="492" cy="223" r="29.500" fill="#2019d2" stroke="none" />
      <circle cx="384.500" cy="163.500" r="121" />
      <polygon points="361.500,29.500 475.500,61.500 520.500,170.500 465.500,274.500 347.500,295.500 258.500,216.500 264.500,98.500" />
      <path d="M384.500 163.500L492 222" stroke="#d6b956" strokeDasharray="15 10" />
      <circle cx="384.500" cy="163.500" r="7" stroke="#1f9c3a" />
      <path d="M380 163.500h9M384.500 159v9" />
      <path d="M458 222.500h69M492.500 188v69" />
      <path d="M491 221h3v3h-3z" fill="#e8ef4a" stroke="none" />
    </svg>
    <span className="absolute -left-2 top-[7px] text-[#c3c8d1]">图</span>
    <div className="absolute left-[508px] top-[239px] flex h-[22px] w-[39px] items-center border border-[#14181d] bg-[#96979b] pl-[3px] text-black">
      圆心
    </div>
    <CommandLine />
  </main>
);

interface StatusProps {
  name: string;
  children: ReactNode;
  active?: boolean;
}

const StatusButton = ({ name, children, active = false }: StatusProps) => (
  <button
    aria-label={name}
    className={clsx("flex h-[22px] w-[22px] items-center justify-center", active && "bg-[#628fbd]")}
  >
    {children}
  </button>
);

const StatusMenu = ({ name, className = "w-[18px]" }: { name: string; className?: string }) => (
  <button aria-label={name} className={clsx("flex h-[22px] items-center justify-center", className)}>
    <Caret big />
  </button>
);

const annotation = "M8 0c-1 2-2 5-2.500 8L1 15.500 7 13v3h2v-3l6 2.500L10.500 8C10 5 9 2 8 0z";

const StatusBar = () => (
  <footer className="flex h-7 justify-between overflow-hidden">
    <div className="flex items-start">
      <div className="h-4 w-1 bg-[#2b323d]" />
      <a href="#" className="ml-[3px] flex h-4 w-[52px] items-center justify-center rounded-b-md bg-[#2f3743] pt-0.5 text-[#b4bac4]">
        布局2
      </a>
      <button aria-label="新建布局" className="ml-1.5 flex h-4 w-[22px] items-center justify-center rounded-b-md bg-[#2f3743]">
        <Icon size={9}>
          <path d="M4.500 0v9M0 4.500h9" stroke="#c3c8d1" />
        </Icon>
      </button>
    </div>
    <div className="flex items-start gap-[3px] pt-0.5">
      <div className="flex bg-[#353c4a]">
        <button className="h-[22px] w-[31px] font-medium text-[#e2e5ea]">模型</button>
        <StatusButton name="栅格" active>
          <Icon>
            <path d="M4.500 0v16M8.500 0v16M12.500 0v16M0 4.500h16M0 8.500h16M0 12.500h16" stroke="#fff" />
          </Icon>
        </StatusButton>
        <span className="w-0.5" />
        <StatusButton name="捕捉">
          <Icon>
            <path d="M2 3h14M2 8h14M2 13h14" strokeWidth="2" strokeDasharray="2 3" />
          </Icon>
        </StatusButton>
        <StatusMenu name="捕捉选项" />
      </div>
      <div className="flex bg-[#353c4a]">
        <StatusButton name="正交">
          <Icon>
            <path d="M1.500 0v14.500H16M1.500 9.500h5v5" />
          </Icon>
        </StatusButton>
        <span className="w-0.5" />
        <StatusButton name="极轴追踪" active>
          <Icon>
            <circle cx="7.500" cy="8.500" r="6" stroke="#fff" />
            <path d="M7.500 8.500H16M7.500 8.500L14 2M11 6l1.500 2.500" stroke="#fff" />
          </Icon>
        </StatusButton>
        <StatusMenu name="极轴选项" />
        <StatusButton name="等轴测草图">
          <Icon>
            <path d="M1 1l5 6M9 9l5 5" stroke="#c88a8f" />
            <path d="M7.500 0v15" stroke="#a9b8b0" />
            <circle cx="7.500" cy="8" r="1.500" />
          </Icon>
        </StatusButton>
        <StatusMenu name="等轴测选项" />
        <span className="w-0.5" />
        <StatusButton name="对象捕捉追踪" active>
          <Icon>
            <path d="M16 13.500H1.500L14 2" stroke="#fff" />
            <path d="M8 7.500h3v6" stroke="#fff" strokeDasharray="2 1" />
          </Icon>
        </StatusButton>
        <span className="w-0.5" />
        <StatusButton name="对象捕捉" active>
          <Icon>
            <path d="M.5.5h4v4h-4z" stroke="#fff" />
            <path d="M7 2.500h8.500v13h-13V7" stroke="#fff" />
          </Icon>
        </StatusButton>
        <StatusMenu name="对象捕捉选项" />
      </div>
      <div className="flex gap-0.5 bg-[#353c4a]">
        <StatusButton name="显示注释对象" active>
          <Icon>
            <path d={annotation} fill="#fff" stroke="none" />
            <circle cx="13" cy="3" r="2.500" stroke="#fff" />
          </Icon>
        </StatusButton>
        <StatusButton name="自动缩放">
          <Icon>
            <path d={annotation} fill="#dfe3ea" stroke="none" />
            <path d="M14 0l-3 3.500h4L12 7.500" />
          </Icon>
        </StatusButton>
        <StatusButton name="注释">
          <Icon>
            <path d={annotation} fill="#dfe3ea" stroke="none" />
          </Icon>
        </StatusButton>
        <div className="flex items-center">
          <button className="w-[18px] text-[#dfe3ea]">1:1</button>
          <StatusMenu name="注释比例" className="w-3.5" />
        </div>
      </div>
      <div className="flex bg-[#353c4a]">
        <StatusButton name="切换工作空间">
          <Icon>
            <circle cx="8" cy="8" r="4.500" strokeWidth="4" />
            <path d="M8 0v3M8 13v3M0 8h3M13 8h3M2.300 2.300l2 2M11.700 11.700l2 2M2.300 13.700l2-2M11.700 4.300l2-2" strokeWidth="3" />
          </Icon>
        </StatusButton>
        <StatusMenu name="工作空间选项" className="w-3.5" />
      </div>
    </div>
  </footer>
);

export default function App() {
  return (
    <div className="flex h-screen flex-col overflow-hidden bg-[#222933] font-['Noto_Sans','Noto_Sans_CJK_SC',sans-serif] text-xs text-[#dfe3ea]">
      <TitleBar />
      <MenuTabs />
      <Ribbon />
      <FileTabs />
      <Canvas />
      <StatusBar />
    </div>
  );
}
